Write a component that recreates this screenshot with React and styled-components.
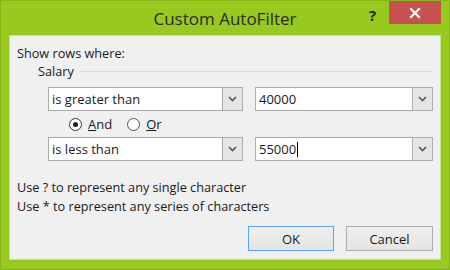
import React from 'react';
import styled, { createGlobalStyle } from 'styled-components';

const GlobalStyle = createGlobalStyle`
  html, body {
    margin: 0;
    padding: 0;
    background: #97c91e;
  }
  body {
    font-family: "Open Sans", "Noto Sans", sans-serif;
  }
`

export default function App() {

  // HTML ============

  return (
    <>
      <GlobalStyle />
      <Window>
        <TitleBar>
          <Title>Custom AutoFilter</Title>
          <HelpButton>?</HelpButton>
          <CloseButton>
            <svg width="12" height="12" viewBox="0 0 12 12">
              <path d="M2 2 L10 10 M10 2 L2 10" stroke="#fff" strokeWidth="2.2" strokeLinecap="square" />
            </svg>
          </CloseButton>
        </TitleBar>

        <Panel>
          <Label>Show rows where:</Label>
          <Group>
            <Legend>
              <span>Salary</span>
              <Rule />
            </Legend>

            <FilterRow>
              <Combo width={195}>
                <ComboText>is greater than</ComboText>
                <ComboArrow><Chevron /></ComboArrow>
              </Combo>
              <Combo width={178}>
                <ComboText>40000</ComboText>
                <ComboArrow><Chevron /></ComboArrow>
              </Combo>
            </FilterRow>

            <RadioRow>
              <RadioOption>
                <RadioCircle checked />
                <span><u>A</u>nd</span>
              </RadioOption>
              <RadioOption>
                <RadioCircle />
                <span><u>O</u>r</span>
              </RadioOption>
            </RadioRow>

            <FilterRow>
              <Combo width={195}>
                <ComboText>is less than</ComboText>
                <ComboArrow><Chevron /></ComboArrow>
              </Combo>
              <Combo width={178}>
                <ComboText>55000<Caret /></ComboText>
                <ComboArrow><Chevron /></ComboArrow>
              </Combo>
            </FilterRow>
          </Group>

          <Hints>
            <div>Use ? to represent any single character</div>
            <div>Use * to represent any series of characters</div>
          </Hints>

          <ButtonRow>
            <Button primary width={86}>OK</Button>
            <Button width={87}>Cancel</Button>
          </ButtonRow>
        </Panel>
      </Window>
    </>
  )
}

const Chevron = () => (
  <svg width="9" height="6" viewBox="0 0 9 6">
    <path d="M1 1 L4.5 4.5 L8 1" fill="none" stroke="#555" strokeWidth="1.6" />
  </svg>
)

// Styled ============

const Window = styled.div`
  width: 450px;
  height: 270px;
  box-sizing: border-box;
  background: #97c91e;
  border: 1px solid #86b517;
  display: flex;
  flex-direction: column;
`

const TitleBar = styled.div`
  height: 34px;
  position: relative;
  display: flex;
  align-items: center;
  justify-content: center;
`

const Title = styled.div`
  font-size: 17px;
  color: #2b2b2b;
  margin-top: 1px;
`

const HelpButton = styled.div`
  position: absolute;
  left: 368px;
  top: 4px;
  font-size: 15px;
  font-weight: bold;
  color: #222;
`

const CloseButton = styled.div`
  position: absolute;
  left: 388px;
  top: 0;
  width: 52px;
  height: 23px;
  background: #c75050;
  display: flex;
  align-items: center;
  justify-content: center;
`

const Panel = styled.div`
  flex: 1;
  margin: 0 8px 9px 8px;
  background: #f0f0f0;
  border: 1px solid #c9df9a;
  padding: 8px 7px 8px 7px;
  display: flex;
  flex-direction: column;
  font-size: 12.7px;
  color: #1a1a1a;
`

const Label = styled.div`
  line-height: 16px;
  height: 16px;
  margin-top: 1px;
`

const Group = styled.div`
  margin-left: 21px;
  display: flex;
  flex-direction: column;
`

const Legend = styled.div`
  display: flex;
  align-items: center;
  gap: 6px;
  height: 16px;
  line-height: 16px;
  margin-top: 2px;
  margin-bottom: 8px;
`

const Rule = styled.div`
  flex: 1;
  height: 1px;
  background: #dcdcdc;
`

const FilterRow = styled.div`
  display: flex;
  gap: 12px;
  padding-left: 10px;
`

const Combo = styled.div`
  width: ${p => p.width}px;
  height: 24px;
  box-sizing: border-box;
  border: 1px solid #acacac;
  background: #fff;
  display: flex;
  align-items: stretch;
`

const ComboText = styled.div`
  flex: 1;
  display: flex;
  align-items: center;
  padding-left: 3px;
  font-size: 13px;
  color: #1a1a1a;
`

const Caret = styled.span`
  display: inline-block;
  width: 1px;
  height: 15px;
  background: #000;
  margin-left: 1px;
`

const ComboArrow = styled.div`
  width: 19px;
  border-left: 1px solid #acacac;
  background: #e5e5e5;
  display: flex;
  align-items: center;
  justify-content: center;
`

const RadioRow = styled.div`
  height: 26px;
  display: flex;
  align-items: center;
  gap: 15px;
  padding-left: 31px;
`

const RadioOption = styled.div`
  display: flex;
  align-items: center;
  gap: 6px;
  font-size: 13px;
`

const RadioCircle = styled.span`
  width: 13px;
  height: 13px;
  box-sizing: border-box;
  border-radius: 50%;
  border: 1px solid ${p => p.checked ? '#333' : '#555'};
  background: #fff;
  display: flex;
  align-items: center;
  justify-content: center;
  &::after {
    content: '';
    width: 5px;
    height: 5px;
    border-radius: 50%;
    background: ${p => p.checked ? '#1a1a1a' : 'transparent'};
  }
`

const Hints = styled.div`
  margin-top: 17px;
  line-height: 19px;
`

const ButtonRow = styled.div`
  margin-top: auto;
  display: flex;
  justify-content: flex-end;
  gap: 12px;
`

const Button = styled.div`
  width: ${p => p.width}px;
  height: 25px;
  box-sizing: border-box;
  border: 1px solid ${p => p.primary ? '#5aa6e8' : '#acacac'};
  background: linear-gradient(#efefef, #e4e4e4);
  display: flex;
  align-items: center;
  justify-content: center;
  font-size: 13px;
  color: #1a1a1a;
`
